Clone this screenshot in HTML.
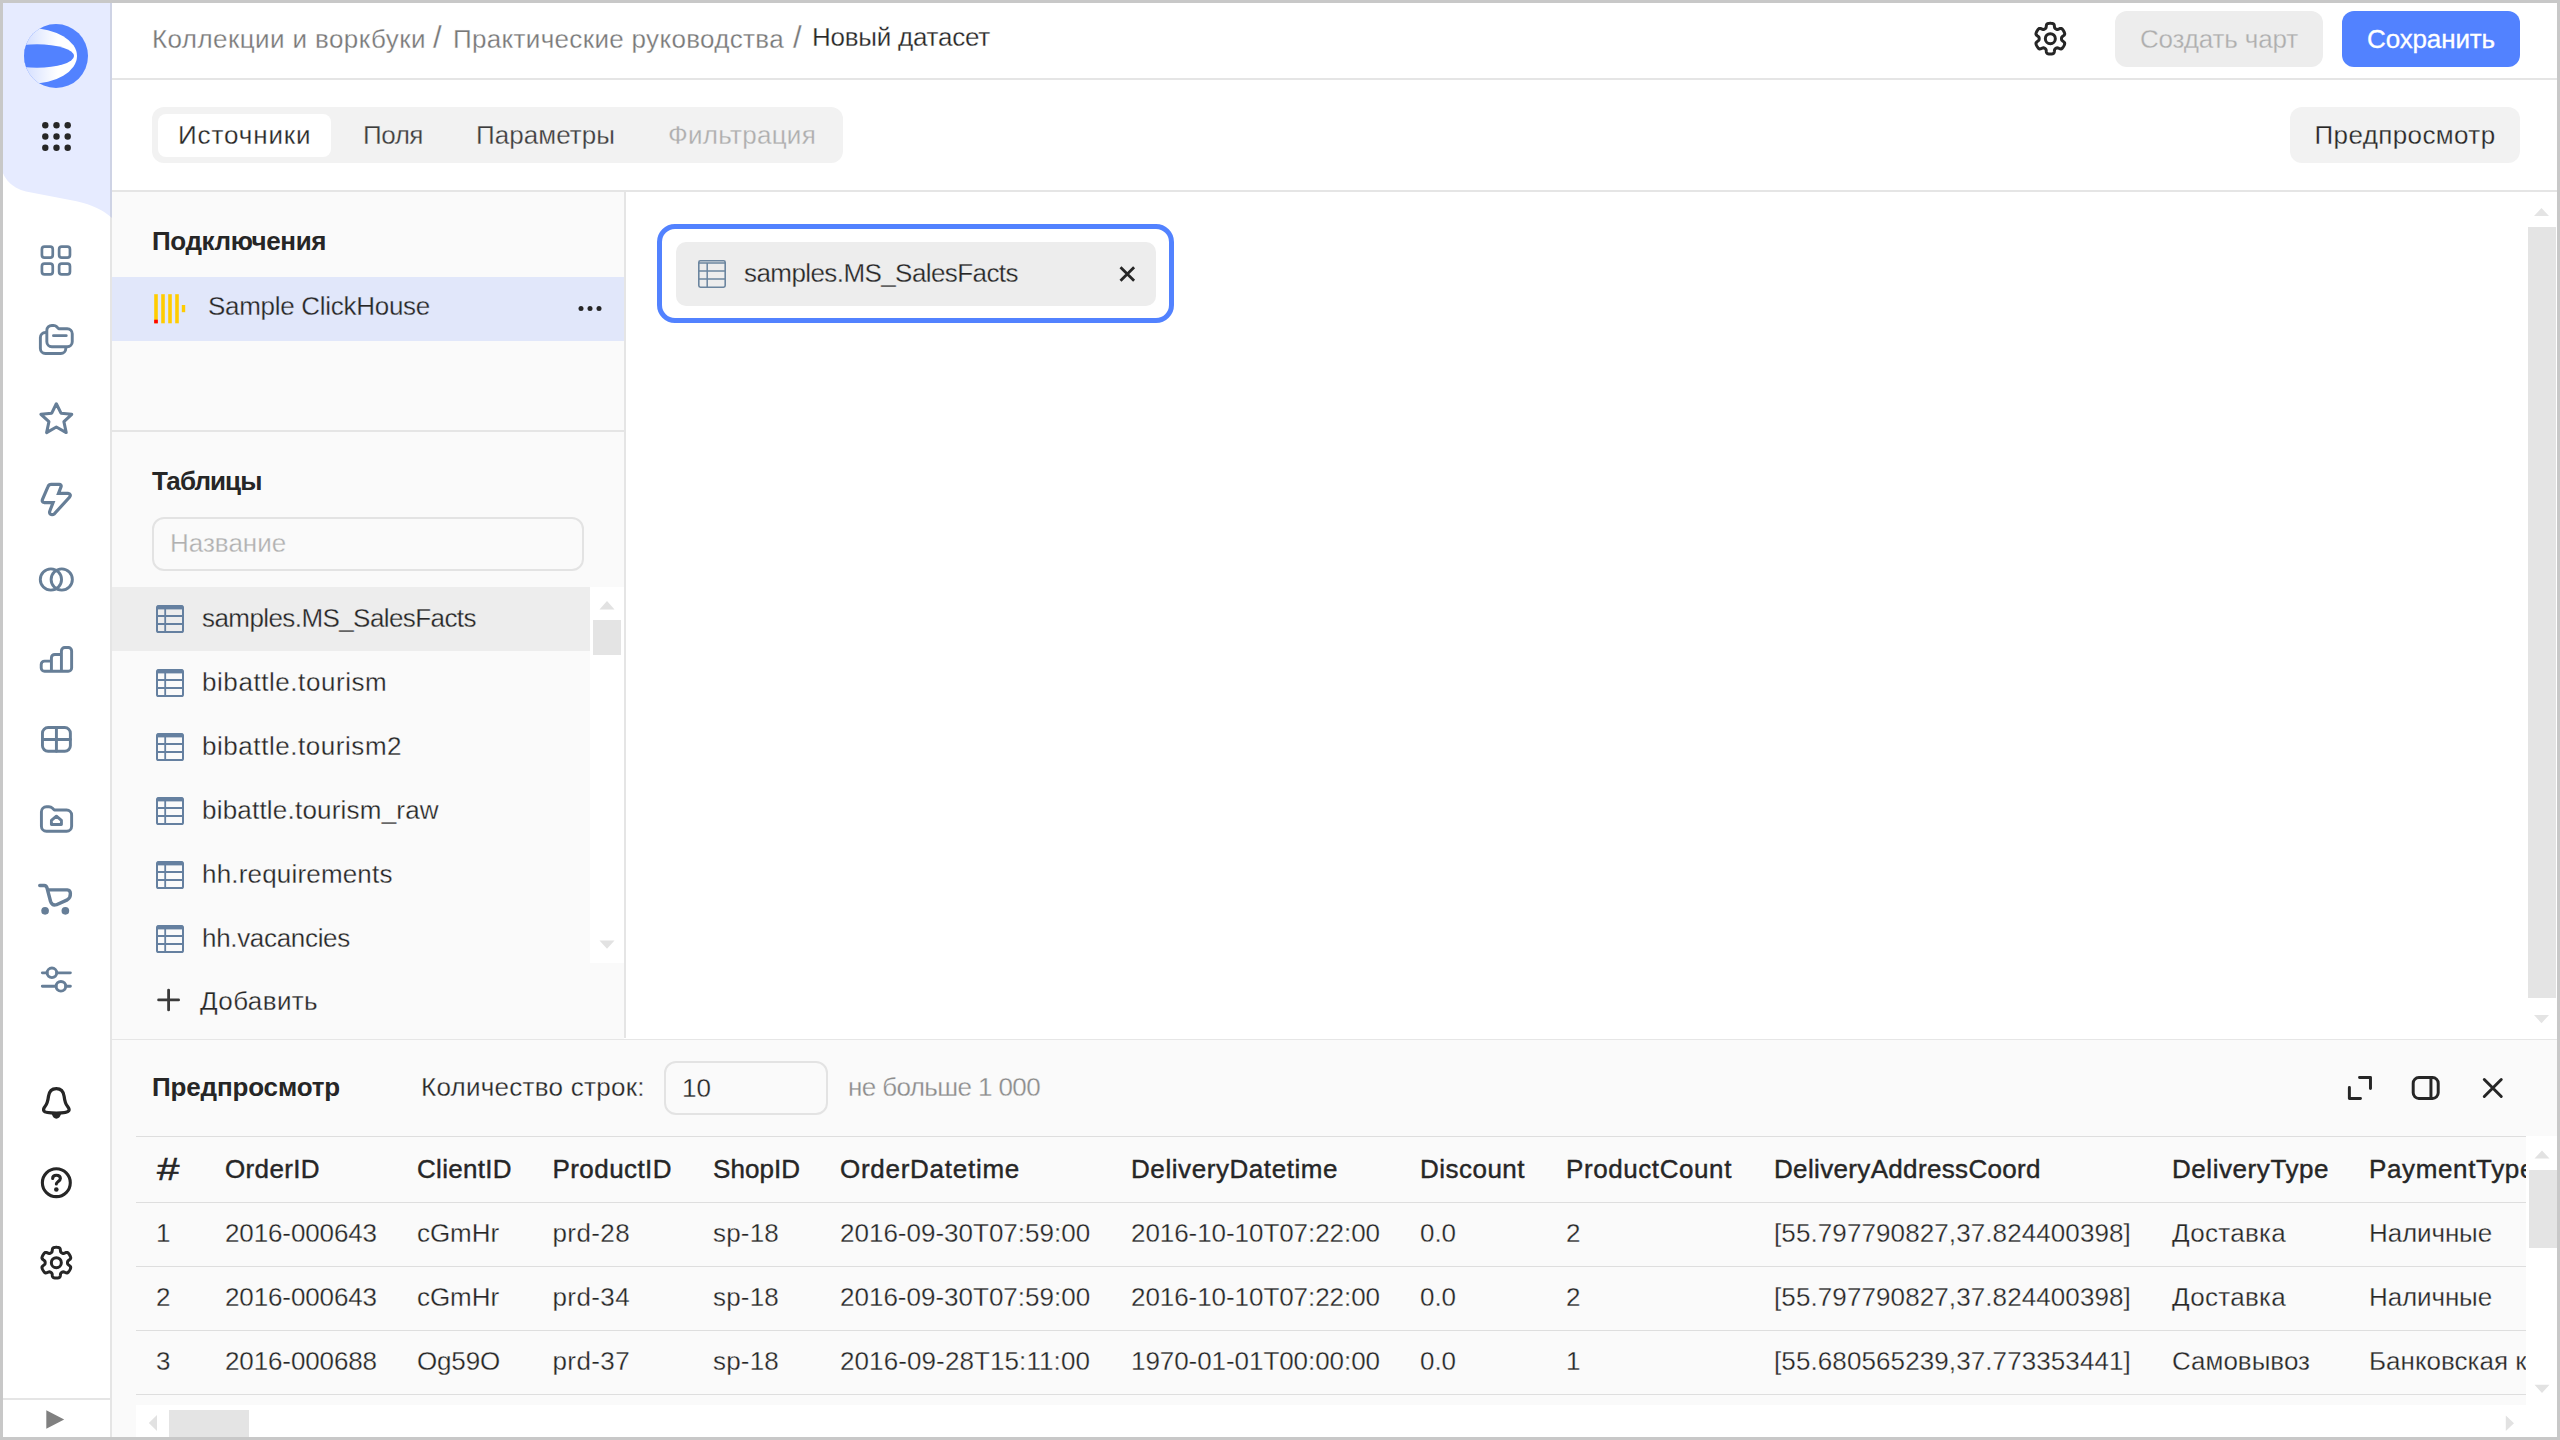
<!DOCTYPE html>
<html lang="ru">
<head>
<meta charset="utf-8">
<title>Новый датасет</title>
<style>
*{box-sizing:border-box;margin:0;padding:0}
html,body{width:2560px;height:1440px;overflow:hidden;background:#fff}
body{font-family:"Liberation Sans",sans-serif;font-size:26px;color:#262626;position:relative}
.a{position:absolute}
.t{position:absolute;white-space:nowrap;line-height:40px;height:40px}
.b{font-weight:700}
.t,.td,.btn{-webkit-text-stroke:.28px #fcfcfc}
.b{-webkit-text-stroke:0 transparent}
.e{-webkit-text-stroke:.28px #ededed}
.s{-webkit-text-stroke:.28px #f2f2f2}
.c{-webkit-text-stroke:.28px #e1e7fa}
.n{-webkit-text-stroke:.3px #fff}
.g{color:#787878}
.hl{position:absolute;background:#e5e5e5;height:2px}
.vl{position:absolute;background:#e5e5e5;width:2px}
.btn{position:absolute;height:56px;border-radius:12px;text-align:center;line-height:56px;white-space:nowrap}
.row{position:absolute;left:112px;width:478px;height:64px}
.row .t{left:90px;top:11px}
.th{position:absolute;height:62px;line-height:62px;white-space:nowrap;-webkit-text-stroke:0.42px #262626}
.td{position:absolute;height:58px;line-height:58px;white-space:nowrap}
svg{position:absolute;overflow:visible}
</style>
</head>
<body>

<!-- ===== sidebar ===== -->
<div class="a" id="aside" style="left:0;top:0;width:112px;height:1440px;background:#fff"></div>
<div class="a" style="left:0;top:0;width:112px;height:160px;background:#e6ebff"></div>
<svg style="left:0;top:160px" width="112" height="58" viewBox="0 0 56 29"><path fill="#e6ebff" d="M56 0v29c-.8-1-7-6.1-17.7-8.4L13 15.7A16 16 0 0 1 0 0Z"/></svg>
<div class="vl" style="left:110px;top:0;height:1440px;background:rgba(0,0,0,.1)"></div>
<div class="hl" style="left:0;top:1398px;width:111px"></div>
<!--SIDEBAR-ICONS-S-->
<svg style="left:24px;top:24px" width="64" height="64" viewBox="0 0 64 64"><defs><clipPath id="lc"><circle cx="32" cy="32" r="32"/></clipPath><linearGradient id="lg" gradientUnits="userSpaceOnUse" x1="0" y1="0" x2="34" y2="0"><stop offset="0" stop-color="#d3deff"/><stop offset="1" stop-color="#fff"/></linearGradient></defs><g clip-path="url(#lc)"><rect width="64" height="64" fill="#5282ff"/><ellipse cx="6" cy="32" rx="47" ry="28" fill="url(#lg)"/><ellipse cx="13" cy="32" rx="37" ry="11.7" fill="#5282ff"/></g></svg>
<svg style="left:0;top:0" width="112" height="160" viewBox="0 0 112 160"><g fill="#262626"><circle cx="45.3" cy="125.2" r="3.2"/><circle cx="56.5" cy="125.2" r="3.2"/><circle cx="67.7" cy="125.2" r="3.2"/><circle cx="45.3" cy="136.5" r="3.2"/><circle cx="56.5" cy="136.5" r="3.2"/><circle cx="67.7" cy="136.5" r="3.2"/><circle cx="45.3" cy="147.8" r="3.2"/><circle cx="56.5" cy="147.8" r="3.2"/><circle cx="67.7" cy="147.8" r="3.2"/></g></svg>
<svg style="left:16px;top:231px" width="80" height="60" viewBox="0 0 1920 1440"><g fill="none" stroke="#667e97" stroke-width="65" stroke-linecap="round" stroke-linejoin="round"><rect x="622" y="377" width="260" height="260" rx="62"/><rect x="1035" y="377" width="260" height="260" rx="62"/><rect x="622" y="782" width="260" height="260" rx="62"/><rect x="1035" y="782" width="260" height="260" rx="62"/></g></svg>
<svg style="left:16px;top:310px" width="80" height="60" viewBox="0 0 1920 1440"><g fill="none" stroke="#667e97" stroke-width="70" stroke-linecap="round" stroke-linejoin="round"><path d="M740 490 A120 120 0 0 1 860 370 L900 370 Q945 372 975 400 L1025 450 L1230 450 A120 120 0 0 1 1350 570 L1350 760 A120 120 0 0 1 1230 880 L860 880 A120 120 0 0 1 740 760Z"/><path d="M900 615 L1205 615"/><path d="M705 540 A120 120 0 0 0 585 660 L585 925 A120 120 0 0 0 705 1045 L1075 1045 A120 120 0 0 0 1195 925 L1195 915"/></g></svg>
<svg style="left:16px;top:389px" width="80" height="60" viewBox="0 0 1920 1440"><g fill="none" stroke="#667e97" stroke-width="74" stroke-linecap="round" stroke-linejoin="round"><path d="M968 355 L1080 580 L1338 608 L1150 785 L1205 1045 L968 912 L735 1045 L790 785 L598 608 L858 580Z"/></g></svg>
<svg style="left:16px;top:469px" width="80" height="60" viewBox="0 0 1920 1440"><g fill="none" stroke="#667e97" stroke-width="76" stroke-linecap="round" stroke-linejoin="miter"><path d="M768 425 Q790 370 845 370 L1035 370 Q1100 372 1080 430 L1020 585 L1245 585 Q1335 600 1288 672 L925 1072 Q870 1118 822 1082 Q795 1052 812 1008 L890 805 L675 805 Q612 795 636 730Z"/></g></svg>
<svg style="left:16px;top:549px" width="80" height="60" viewBox="0 0 1920 1440"><g fill="none" stroke="#667e97" stroke-width="70" stroke-linecap="round" stroke-linejoin="round"><circle cx="838" cy="732" r="255"/><circle cx="1098" cy="732" r="255"/></g></svg>
<svg style="left:16px;top:629px" width="80" height="60" viewBox="0 0 1920 1440"><g fill="none" stroke="#667e97" stroke-width="70" stroke-linecap="round" stroke-linejoin="round"><path d="M850 770 L685 770 A80 80 0 0 0 605 850 L605 935 A80 80 0 0 0 685 1015 L1255 1015 A80 80 0 0 0 1335 935 L1335 525 A80 80 0 0 0 1255 445 L1170 445 A80 80 0 0 0 1090 525 L1090 1015 M1090 610 L930 610 A80 80 0 0 0 850 690 L850 1015"/></g></svg>
<svg style="left:16px;top:709px" width="80" height="60" viewBox="0 0 1920 1440"><g fill="none" stroke="#667e97" stroke-width="70" stroke-linecap="round" stroke-linejoin="round"><rect x="635" y="445" width="670" height="570" rx="135"/><path d="M970 445 L970 1015 M635 732 L1305 732"/></g></svg>
<svg style="left:16px;top:789px" width="80" height="60" viewBox="0 0 1920 1440"><g fill="none" stroke="#667e97" stroke-width="70" stroke-linecap="round" stroke-linejoin="round"><path d="M610 545 A120 120 0 0 1 730 425 L790 425 Q840 427 870 455 L920 505 L1215 505 A120 120 0 0 1 1335 625 L1335 895 A120 120 0 0 1 1215 1015 L730 1015 A120 120 0 0 1 610 895Z"/><path d="M970 652 L1090 755 L1090 850 L850 850 L850 755Z"/></g></svg>
<svg style="left:16px;top:869px" width="80" height="60" viewBox="0 0 1920 1440"><g fill="none" stroke="#667e97" stroke-width="82" stroke-linecap="round" stroke-linejoin="round"><path d="M570 395 L675 395 Q730 400 745 455 L830 780 Q870 892 972 858 L1230 740 Q1310 692 1305 590 Q1305 505 1230 500 L775 500"/></g><g fill="#667e97"><circle cx="698" cy="1003" r="92"/><circle cx="1185" cy="1003" r="92"/></g></svg>
<svg style="left:16px;top:949px" width="80" height="60" viewBox="0 0 1920 1440"><g fill="none" stroke="#667e97" stroke-width="70" stroke-linecap="round" stroke-linejoin="round"><circle cx="862" cy="572" r="115"/><path d="M632 572 L745 572 M980 572 L1305 572"/><circle cx="1078" cy="895" r="115"/><path d="M632 895 L960 895 M1195 895 L1305 895"/></g></svg>
<svg style="left:16px;top:1073px" width="80" height="60" viewBox="0 0 1920 1440"><g fill="none" stroke="#262626" stroke-width="78" stroke-linecap="round" stroke-linejoin="round"><path d="M968 375 C850 375 795 450 780 560 C765 680 750 740 700 800 C660 850 650 880 670 910 C700 950 850 960 968 960 C1090 960 1240 950 1265 910 C1290 880 1275 850 1235 800 C1185 740 1170 680 1155 560 C1140 450 1085 375 968 375Z"/></g><path fill="#262626" d="M860 985 L1080 985 Q1050 1095 968 1095 Q890 1095 860 985Z"/></svg>
<svg style="left:16px;top:1153px" width="80" height="60" viewBox="0 0 1920 1440"><g fill="none" stroke="#262626" stroke-width="74" stroke-linecap="round" stroke-linejoin="round"><circle cx="968" cy="712" r="335"/><path d="M880 610 C880 560 920 535 968 535 C1030 535 1065 570 1065 612 C1065 675 968 690 968 745"/></g><circle cx="968" cy="875" r="55" fill="#262626"/></svg>
<svg style="left:16px;top:1233px" width="80" height="60" viewBox="0 0 1920 1440"><g fill="none" stroke="#262626" stroke-width="72" stroke-linecap="round" stroke-linejoin="round"><path d="M1236.0 712.0 L1236.2 702.6 L1237.0 693.2 L1239.3 683.5 L1244.9 673.1 L1256.8 661.1 L1276.4 646.5 L1297.0 630.0 L1309.4 614.1 L1313.2 599.9 L1311.9 586.8 L1308.5 574.4 L1303.9 562.4 L1298.7 550.7 L1292.9 539.2 L1286.7 528.0 L1280.1 517.0 L1273.0 506.3 L1265.5 495.9 L1257.4 485.9 L1248.4 476.7 L1237.7 469.2 L1223.5 465.3 L1203.5 468.1 L1178.9 477.7 L1156.5 487.4 L1140.1 491.7 L1128.4 491.3 L1118.8 488.4 L1110.2 484.4 L1102.0 479.9 L1094.0 475.0 L1086.2 469.6 L1079.0 462.8 L1072.7 452.8 L1068.3 436.5 L1065.4 412.2 L1061.5 386.1 L1053.9 367.4 L1043.5 357.0 L1031.6 351.5 L1019.1 348.4 L1006.4 346.3 L993.7 345.0 L980.8 344.2 L968.0 344.0 L955.2 344.2 L942.3 345.0 L929.6 346.3 L916.9 348.4 L904.4 351.5 L892.5 357.0 L882.1 367.4 L874.5 386.1 L870.6 412.2 L867.7 436.5 L863.3 452.8 L857.0 462.8 L849.8 469.6 L842.0 475.0 L834.0 479.9 L825.8 484.4 L817.2 488.4 L807.6 491.3 L795.9 491.7 L779.5 487.4 L757.1 477.7 L732.5 468.1 L712.5 465.3 L698.3 469.2 L687.6 476.7 L678.6 485.9 L670.5 495.9 L663.0 506.3 L655.9 517.0 L649.3 528.0 L643.1 539.2 L637.3 550.7 L632.1 562.4 L627.5 574.4 L624.1 586.8 L622.8 599.9 L626.6 614.1 L639.0 630.0 L659.6 646.5 L679.2 661.1 L691.1 673.1 L696.7 683.5 L699.0 693.2 L699.8 702.6 L700.0 712.0 L699.8 721.4 L699.0 730.8 L696.7 740.5 L691.1 750.9 L679.2 762.9 L659.6 777.5 L639.0 794.0 L626.6 809.9 L622.8 824.1 L624.1 837.2 L627.5 849.6 L632.1 861.6 L637.3 873.3 L643.1 884.8 L649.3 896.0 L655.9 907.0 L663.0 917.7 L670.5 928.1 L678.6 938.1 L687.6 947.3 L698.3 954.8 L712.5 958.7 L732.5 955.9 L757.1 946.3 L779.5 936.6 L795.9 932.3 L807.6 932.7 L817.2 935.6 L825.8 939.6 L834.0 944.1 L842.0 949.0 L849.8 954.4 L857.0 961.2 L863.3 971.2 L867.7 987.5 L870.6 1011.8 L874.5 1037.9 L882.1 1056.6 L892.5 1067.0 L904.4 1072.5 L916.9 1075.6 L929.6 1077.7 L942.3 1079.0 L955.2 1079.8 L968.0 1080.0 L980.8 1079.8 L993.7 1079.0 L1006.4 1077.7 L1019.1 1075.6 L1031.6 1072.5 L1043.5 1067.0 L1053.9 1056.6 L1061.5 1037.9 L1065.4 1011.8 L1068.3 987.5 L1072.7 971.2 L1079.0 961.2 L1086.2 954.4 L1094.0 949.0 L1102.0 944.1 L1110.2 939.6 L1118.8 935.6 L1128.4 932.7 L1140.1 932.3 L1156.5 936.6 L1178.9 946.3 L1203.5 955.9 L1223.5 958.7 L1237.7 954.8 L1248.4 947.3 L1257.4 938.1 L1265.5 928.1 L1273.0 917.7 L1280.1 907.0 L1286.7 896.0 L1292.9 884.8 L1298.7 873.3 L1303.9 861.6 L1308.5 849.6 L1311.9 837.2 L1313.2 824.1 L1309.4 809.9 L1297.0 794.0 L1276.4 777.5 L1256.8 762.9 L1244.9 750.9 L1239.3 740.5 L1237.0 730.8 L1236.2 721.4Z"/><circle cx="968" cy="712" r="120"/></g></svg>
<svg style="left:0;top:1400px" width="112" height="40" viewBox="0 0 112 40"><path fill="#808080" d="M46.3 10.3 L64.2 19.5 L46.3 28.7Z"/></svg>
<!--SIDEBAR-ICONS-E-->

<!-- ===== top bar ===== -->
<div class="hl" style="left:112px;top:78px;width:2448px"></div>
<div class="t g" style="left:152px;top:19px;letter-spacing:.41px">Коллекции и воркбуки</div>
<div class="t g" style="left:433px;top:18px;font-size:31px">/</div>
<div class="t g" style="left:453px;top:19px;letter-spacing:.33px">Практические руководства</div>
<div class="t g" style="left:793px;top:18px;font-size:31px">/</div>
<div class="t" style="left:812px;top:17px;letter-spacing:-.24px">Новый датасет</div>
<!--TOP-ICONS-S-->
<svg style="left:2009.6666666666667px;top:9.083333333333332px" width="80" height="60" viewBox="0 0 1920 1440"><g fill="none" stroke="#262626" stroke-width="72" stroke-linecap="round" stroke-linejoin="round"><path d="M1236.0 712.0 L1236.2 702.6 L1237.0 693.2 L1239.3 683.5 L1244.9 673.1 L1256.8 661.1 L1276.4 646.5 L1297.0 630.0 L1309.4 614.1 L1313.2 599.9 L1311.9 586.8 L1308.5 574.4 L1303.9 562.4 L1298.7 550.7 L1292.9 539.2 L1286.7 528.0 L1280.1 517.0 L1273.0 506.3 L1265.5 495.9 L1257.4 485.9 L1248.4 476.7 L1237.7 469.2 L1223.5 465.3 L1203.5 468.1 L1178.9 477.7 L1156.5 487.4 L1140.1 491.7 L1128.4 491.3 L1118.8 488.4 L1110.2 484.4 L1102.0 479.9 L1094.0 475.0 L1086.2 469.6 L1079.0 462.8 L1072.7 452.8 L1068.3 436.5 L1065.4 412.2 L1061.5 386.1 L1053.9 367.4 L1043.5 357.0 L1031.6 351.5 L1019.1 348.4 L1006.4 346.3 L993.7 345.0 L980.8 344.2 L968.0 344.0 L955.2 344.2 L942.3 345.0 L929.6 346.3 L916.9 348.4 L904.4 351.5 L892.5 357.0 L882.1 367.4 L874.5 386.1 L870.6 412.2 L867.7 436.5 L863.3 452.8 L857.0 462.8 L849.8 469.6 L842.0 475.0 L834.0 479.9 L825.8 484.4 L817.2 488.4 L807.6 491.3 L795.9 491.7 L779.5 487.4 L757.1 477.7 L732.5 468.1 L712.5 465.3 L698.3 469.2 L687.6 476.7 L678.6 485.9 L670.5 495.9 L663.0 506.3 L655.9 517.0 L649.3 528.0 L643.1 539.2 L637.3 550.7 L632.1 562.4 L627.5 574.4 L624.1 586.8 L622.8 599.9 L626.6 614.1 L639.0 630.0 L659.6 646.5 L679.2 661.1 L691.1 673.1 L696.7 683.5 L699.0 693.2 L699.8 702.6 L700.0 712.0 L699.8 721.4 L699.0 730.8 L696.7 740.5 L691.1 750.9 L679.2 762.9 L659.6 777.5 L639.0 794.0 L626.6 809.9 L622.8 824.1 L624.1 837.2 L627.5 849.6 L632.1 861.6 L637.3 873.3 L643.1 884.8 L649.3 896.0 L655.9 907.0 L663.0 917.7 L670.5 928.1 L678.6 938.1 L687.6 947.3 L698.3 954.8 L712.5 958.7 L732.5 955.9 L757.1 946.3 L779.5 936.6 L795.9 932.3 L807.6 932.7 L817.2 935.6 L825.8 939.6 L834.0 944.1 L842.0 949.0 L849.8 954.4 L857.0 961.2 L863.3 971.2 L867.7 987.5 L870.6 1011.8 L874.5 1037.9 L882.1 1056.6 L892.5 1067.0 L904.4 1072.5 L916.9 1075.6 L929.6 1077.7 L942.3 1079.0 L955.2 1079.8 L968.0 1080.0 L980.8 1079.8 L993.7 1079.0 L1006.4 1077.7 L1019.1 1075.6 L1031.6 1072.5 L1043.5 1067.0 L1053.9 1056.6 L1061.5 1037.9 L1065.4 1011.8 L1068.3 987.5 L1072.7 971.2 L1079.0 961.2 L1086.2 954.4 L1094.0 949.0 L1102.0 944.1 L1110.2 939.6 L1118.8 935.6 L1128.4 932.7 L1140.1 932.3 L1156.5 936.6 L1178.9 946.3 L1203.5 955.9 L1223.5 958.7 L1237.7 954.8 L1248.4 947.3 L1257.4 938.1 L1265.5 928.1 L1273.0 917.7 L1280.1 907.0 L1286.7 896.0 L1292.9 884.8 L1298.7 873.3 L1303.9 861.6 L1308.5 849.6 L1311.9 837.2 L1313.2 824.1 L1309.4 809.9 L1297.0 794.0 L1276.4 777.5 L1256.8 762.9 L1244.9 750.9 L1239.3 740.5 L1237.0 730.8 L1236.2 721.4Z"/><circle cx="968" cy="712" r="120"/></g></svg>
<!--TOP-ICONS-E-->
<div class="btn e" style="left:2115px;top:11px;width:208px;background:#ededed;color:#adadad;letter-spacing:-.15px">Создать чарт</div>
<div class="btn n" style="left:2342px;top:11px;width:178px;background:#5282ff;color:#fff;letter-spacing:-.13px">Сохранить</div>

<!-- ===== tabs bar ===== -->
<div class="a" style="left:152px;top:107px;width:691px;height:56px;border-radius:12px;background:#f2f2f2"></div>
<div class="a" style="left:158px;top:114px;width:173px;height:43px;border-radius:8px;background:#fff"></div>
<div class="t" style="left:178px;top:115px;letter-spacing:.88px">Источники</div>
<div class="t s" style="left:363px;top:115px;letter-spacing:-.46px;color:#3d3d3d">Поля</div>
<div class="t s" style="left:476px;top:115px;letter-spacing:.04px;color:#3d3d3d">Параметры</div>
<div class="t s" style="left:668px;top:115px;letter-spacing:.27px;color:#adadad">Фильтрация</div>
<div class="btn s" style="left:2290px;top:107px;width:230px;background:#f2f2f2;letter-spacing:.39px">Предпросмотр</div>
<div class="hl" style="left:112px;top:190px;width:2448px"></div>

<!-- ===== left panel ===== -->
<div class="a" style="left:112px;top:192px;width:512px;height:847px;background:#fafafa"></div>
<div class="vl" style="left:624px;top:192px;height:846px"></div>
<div class="t b" style="left:152px;top:221px;letter-spacing:-.38px">Подключения</div>
<div class="a" style="left:112px;top:277px;width:512px;height:64px;background:#e1e7fa"></div>
<div class="t c" style="left:208px;top:286px;letter-spacing:-.29px">Sample ClickHouse</div>
<!--CONN-ICONS-S-->
<svg style="left:0;top:0" width="640" height="360" viewBox="0 0 640 360"><rect x="154.2" y="294.2" width="3.6" height="29.1" fill="#fc0"/><rect x="161.2" y="294.2" width="3.6" height="29.1" fill="#fc0"/><rect x="168.2" y="294.2" width="3.6" height="29.1" fill="#fc0"/><rect x="175.2" y="294.2" width="3.6" height="29.1" fill="#fc0"/><rect x="181.8" y="305" width="3.4" height="7.2" fill="#fc0"/><rect x="154.2" y="319.7" width="3.6" height="3.6" fill="#f00"/><g fill="#262626"><circle cx="581" cy="308.6" r="2.5"/><circle cx="590" cy="308.6" r="2.5"/><circle cx="599" cy="308.6" r="2.5"/></g></svg>
<!--CONN-ICONS-E-->
<div class="hl" style="left:112px;top:430px;width:512px"></div>
<div class="t b" style="left:152px;top:461px;letter-spacing:-.9px">Таблицы</div>
<div class="a" style="left:152px;top:517px;width:432px;height:54px;border:2px solid #e3e3e3;border-radius:12px"></div>
<div class="t" style="left:170px;top:523px;color:#b0b0b0">Название</div>

<div class="a" style="left:590px;top:587px;width:34px;height:376px;background:#fff"></div>
<div class="a" style="left:593px;top:620px;width:28px;height:35px;background:#e4e4e4"></div>
<div class="row" style="top:587px;background:#ededed"><div class="t e" style="letter-spacing:-.58px">samples.MS_SalesFacts</div></div>
<div class="row" style="top:651px"><div class="t" style="letter-spacing:.56px">bibattle.tourism</div></div>
<div class="row" style="top:715px"><div class="t" style="letter-spacing:.55px">bibattle.tourism2</div></div>
<div class="row" style="top:779px"><div class="t" style="letter-spacing:.21px">bibattle.tourism_raw</div></div>
<div class="row" style="top:843px"><div class="t" style="letter-spacing:.18px">hh.requirements</div></div>
<div class="row" style="top:907px;height:56px"><div class="t" style="letter-spacing:-.32px">hh.vacancies</div></div>
<!--TABLE-ICONS-S-->
<svg style="left:155.6px;top:605px" width="28" height="28" viewBox="0 0 28 28"><rect x="1.0" y="1.0" width="26.0" height="26.0" rx="1.6" fill="none" stroke="#6580a0" stroke-width="2.0"/><rect x="1" y="0.6" width="26" height="3.8" fill="#6580a0"/><path d="M9.2 1 L9.2 27 M1 11 L27 11 M1 19 L27 19" fill="none" stroke="#6580a0" stroke-width="1.8"/></svg>
<svg style="left:155.6px;top:669px" width="28" height="28" viewBox="0 0 28 28"><rect x="1.0" y="1.0" width="26.0" height="26.0" rx="1.6" fill="none" stroke="#6580a0" stroke-width="2.0"/><rect x="1" y="0.6" width="26" height="3.8" fill="#6580a0"/><path d="M9.2 1 L9.2 27 M1 11 L27 11 M1 19 L27 19" fill="none" stroke="#6580a0" stroke-width="1.8"/></svg>
<svg style="left:155.6px;top:733px" width="28" height="28" viewBox="0 0 28 28"><rect x="1.0" y="1.0" width="26.0" height="26.0" rx="1.6" fill="none" stroke="#6580a0" stroke-width="2.0"/><rect x="1" y="0.6" width="26" height="3.8" fill="#6580a0"/><path d="M9.2 1 L9.2 27 M1 11 L27 11 M1 19 L27 19" fill="none" stroke="#6580a0" stroke-width="1.8"/></svg>
<svg style="left:155.6px;top:797px" width="28" height="28" viewBox="0 0 28 28"><rect x="1.0" y="1.0" width="26.0" height="26.0" rx="1.6" fill="none" stroke="#6580a0" stroke-width="2.0"/><rect x="1" y="0.6" width="26" height="3.8" fill="#6580a0"/><path d="M9.2 1 L9.2 27 M1 11 L27 11 M1 19 L27 19" fill="none" stroke="#6580a0" stroke-width="1.8"/></svg>
<svg style="left:155.6px;top:861px" width="28" height="28" viewBox="0 0 28 28"><rect x="1.0" y="1.0" width="26.0" height="26.0" rx="1.6" fill="none" stroke="#6580a0" stroke-width="2.0"/><rect x="1" y="0.6" width="26" height="3.8" fill="#6580a0"/><path d="M9.2 1 L9.2 27 M1 11 L27 11 M1 19 L27 19" fill="none" stroke="#6580a0" stroke-width="1.8"/></svg>
<svg style="left:155.6px;top:925px" width="28" height="28" viewBox="0 0 28 28"><rect x="1.0" y="1.0" width="26.0" height="26.0" rx="1.6" fill="none" stroke="#6580a0" stroke-width="2.0"/><rect x="1" y="0.6" width="26" height="3.8" fill="#6580a0"/><path d="M9.2 1 L9.2 27 M1 11 L27 11 M1 19 L27 19" fill="none" stroke="#6580a0" stroke-width="1.8"/></svg>
<svg style="left:150px;top:980px" width="40" height="40" viewBox="0 0 40 40"><path d="M8.6 19.9 L28.6 19.9 M18.6 10.1 L18.6 29.9" fill="none" stroke="#3a3a3a" stroke-width="2.8" stroke-linecap="round"/></svg>
<svg style="left:590px;top:587px" width="34" height="376" viewBox="0 0 34 376"><path fill="#e2e2e2" d="M9.5 22.5 L24.5 22.5 L17 14Z M9.5 353.5 L24.5 353.5 L17 361.8Z"/></svg>
<!--TABLE-ICONS-E-->
<div class="t" style="left:200px;top:981px;letter-spacing:.39px">Добавить</div>

<!-- ===== canvas ===== -->
<div class="a" style="left:657px;top:224px;width:517px;height:99px;border:5px solid #5282ff;border-radius:18px;background:#fff"></div>
<div class="a" style="left:676px;top:242px;width:480px;height:64px;border-radius:10px;background:#ededed"></div>
<div class="t e" style="left:744px;top:253px;letter-spacing:-.58px">samples.MS_SalesFacts</div>
<div class="a" style="left:2528px;top:227px;width:28px;height:771px;background:#e4e4e4"></div>
<!--CANVAS-ICONS-S-->
<svg style="left:698.3px;top:259.5px" width="28" height="28" viewBox="0 0 28 28"><rect x="0.8" y="0.8" width="26.4" height="26.4" rx="1.6" fill="none" stroke="#6b859f" stroke-width="1.6"/><path d="M9.2 3 L9.2 27 M1 2.9 L27 2.9 M1 11 L27 11 M1 19 L27 19" fill="none" stroke="#6b859f" stroke-width="1.5"/></svg>
<svg style="left:1107px;top:254px" width="40" height="40" viewBox="0 0 40 40"><path d="M13.5 13.2 L27.1 26.8 M27.1 13.2 L13.5 26.8" fill="none" stroke="#262626" stroke-width="2.8"/></svg>
<svg style="left:2528px;top:192px" width="28" height="846" viewBox="0 0 28 846"><path fill="#e4e4e4" d="M6 24 L21 24 L13.5 16Z M6 823 L21 823 L13.5 831.2Z"/></svg>
<!--CANVAS-ICONS-E-->

<!-- ===== preview ===== -->
<div class="a" style="left:112px;top:1039px;width:2448px;height:401px;background:#fafafa"></div>
<div class="hl" style="left:112px;top:1039px;width:2448px;height:1px;background:#e6e6e6"></div>
<div class="t b" style="left:152px;top:1067px;letter-spacing:-.15px">Предпросмотр</div>
<div class="t" style="left:421px;top:1067px;letter-spacing:.27px">Количество строк:</div>
<div class="a" style="left:664px;top:1061px;width:164px;height:54px;border:2px solid #e3e3e3;border-radius:12px"></div>
<div class="t" style="left:682px;top:1068px">10</div>
<div class="t" style="left:848px;top:1067px;letter-spacing:-.61px;color:#8c8c8c">не больше 1 000</div>
<!--TABLE-START-->
<div class="a" style="left:136px;top:1135px;width:2390px;height:270px;overflow:hidden">
<div class="hl" style="left:0;top:1px;width:2390px;height:1px;background:#dedede"></div>
<div class="hl" style="left:0;top:67px;width:2390px;height:1px;background:#dedede"></div>
<div class="hl" style="left:0;top:131px;width:2390px;height:1px;background:#dedede"></div>
<div class="hl" style="left:0;top:195px;width:2390px;height:1px;background:#dedede"></div>
<div class="hl" style="left:0;top:259px;width:2390px;height:1px;background:#dedede"></div>
<div class="th" style="left:20.5px;top:4px;font-size:31px;-webkit-text-stroke:.5px #262626;transform:scaleX(1.3);transform-origin:0 50%">#</div>
<div class="th" style="left:89px;top:3px;letter-spacing:0.36px">OrderID</div>
<div class="th" style="left:281px;top:3px;letter-spacing:0.31px">ClientID</div>
<div class="th" style="left:416.5px;top:3px;letter-spacing:0.43px">ProductID</div>
<div class="th" style="left:577px;top:3px;letter-spacing:0.04px">ShopID</div>
<div class="th" style="left:704px;top:3px;letter-spacing:0.73px">OrderDatetime</div>
<div class="th" style="left:995px;top:3px;letter-spacing:0.57px">DeliveryDatetime</div>
<div class="th" style="left:1284px;top:3px;letter-spacing:0.48px">Discount</div>
<div class="th" style="left:1430px;top:3px;letter-spacing:0.58px">ProductCount</div>
<div class="th" style="left:1638px;top:3px;letter-spacing:0.34px">DeliveryAddressCoord</div>
<div class="th" style="left:2036px;top:3px;letter-spacing:0.56px">DeliveryType</div>
<div class="th" style="left:2233px;top:3px;letter-spacing:0.64px">PaymentType</div>
<div class="td" style="left:20px;top:69px">1</div>
<div class="td" style="left:89px;top:69px;letter-spacing:-0.12px">2016-000643</div>
<div class="td" style="left:281px;top:69px;letter-spacing:-0.07px">cGmHr</div>
<div class="td" style="left:416.5px;top:69px;letter-spacing:0.39px">prd-28</div>
<div class="td" style="left:577px;top:69px;letter-spacing:0.19px">sp-18</div>
<div class="td" style="left:704px;top:69px">2016-09-30T07:59:00</div>
<div class="td" style="left:995px;top:69px;letter-spacing:-0.06px">2016-10-10T07:22:00</div>
<div class="td" style="left:1284px;top:69px;letter-spacing:-0.05px">0.0</div>
<div class="td" style="left:1430px;top:69px">2</div>
<div class="td" style="left:1638px;top:69px;letter-spacing:0.1px">[55.797790827,37.824400398]</div>
<div class="td" style="left:2036px;top:69px;letter-spacing:0.29px">Доставка</div>
<div class="td" style="left:2233px;top:69px;letter-spacing:-0.12px">Наличные</div>
<div class="td" style="left:20px;top:133px">2</div>
<div class="td" style="left:89px;top:133px;letter-spacing:-0.12px">2016-000643</div>
<div class="td" style="left:281px;top:133px;letter-spacing:-0.07px">cGmHr</div>
<div class="td" style="left:416.5px;top:133px;letter-spacing:0.39px">prd-34</div>
<div class="td" style="left:577px;top:133px;letter-spacing:0.19px">sp-18</div>
<div class="td" style="left:704px;top:133px">2016-09-30T07:59:00</div>
<div class="td" style="left:995px;top:133px;letter-spacing:-0.06px">2016-10-10T07:22:00</div>
<div class="td" style="left:1284px;top:133px;letter-spacing:-0.05px">0.0</div>
<div class="td" style="left:1430px;top:133px">2</div>
<div class="td" style="left:1638px;top:133px;letter-spacing:0.1px">[55.797790827,37.824400398]</div>
<div class="td" style="left:2036px;top:133px;letter-spacing:0.29px">Доставка</div>
<div class="td" style="left:2233px;top:133px;letter-spacing:-0.12px">Наличные</div>
<div class="td" style="left:20px;top:197px">3</div>
<div class="td" style="left:89px;top:197px;letter-spacing:-0.12px">2016-000688</div>
<div class="td" style="left:281px;top:197px;letter-spacing:-0.17px">Og59O</div>
<div class="td" style="left:416.5px;top:197px;letter-spacing:0.39px">prd-37</div>
<div class="td" style="left:577px;top:197px;letter-spacing:0.19px">sp-18</div>
<div class="td" style="left:704px;top:197px;letter-spacing:0.1px">2016-09-28T15:11:00</div>
<div class="td" style="left:995px;top:197px;letter-spacing:-0.06px">1970-01-01T00:00:00</div>
<div class="td" style="left:1284px;top:197px;letter-spacing:-0.05px">0.0</div>
<div class="td" style="left:1430px;top:197px">1</div>
<div class="td" style="left:1638px;top:197px;letter-spacing:0.1px">[55.680565239,37.773353441]</div>
<div class="td" style="left:2036px;top:197px">Самовывоз</div>
<div class="td" style="left:2233px;top:197px">Банковская карта</div>
</div>
<div class="a" style="left:2526px;top:1136px;width:31px;height:269px;background:#fff"></div>
<div class="a" style="left:2529px;top:1170px;width:28px;height:78px;background:#e4e4e4"></div>
<div class="a" style="left:136px;top:1405px;width:2421px;height:32px;background:#fff"></div>
<div class="a" style="left:169px;top:1410px;width:80px;height:27px;background:#e4e4e4"></div>
<!--TABLE-END-->
<!--PREVIEW-ICONS-S-->
<svg style="left:2330px;top:1058px" width="200" height="60" viewBox="0 0 2560 768"><g fill="none" stroke="#262626" stroke-width="38" stroke-linecap="round" stroke-linejoin="round"><path d="M378 250 L518 250 L518 390 M248 378 L248 518 L390 518"/><rect x="1065" y="250" width="320" height="268" rx="72"/><path d="M1292 250 L1292 518"/><path d="M1975 275 L2192 492 M2192 275 L1975 492"/></g></svg>
<svg style="left:2526px;top:1136px" width="31" height="269" viewBox="0 0 31 269"><path fill="#e2e2e2" d="M8.5 22.5 L23.5 22.5 L16 14.5Z M8.5 248.7 L23.5 248.7 L16 257Z"/></svg>
<svg style="left:136px;top:1405px" width="2421" height="32" viewBox="0 0 2421 32"><path fill="#e2e2e2" d="M21 10 L21 26 L12.8 18Z M2369.8 10.5 L2369.8 26 L2378 18.2Z"/></svg>
<!--PREVIEW-ICONS-E-->

<!-- frame -->
<div class="a" style="left:0;top:0;width:2560px;height:1440px;border:3px solid #c8c8c8;z-index:50"></div>
</body>
</html>
